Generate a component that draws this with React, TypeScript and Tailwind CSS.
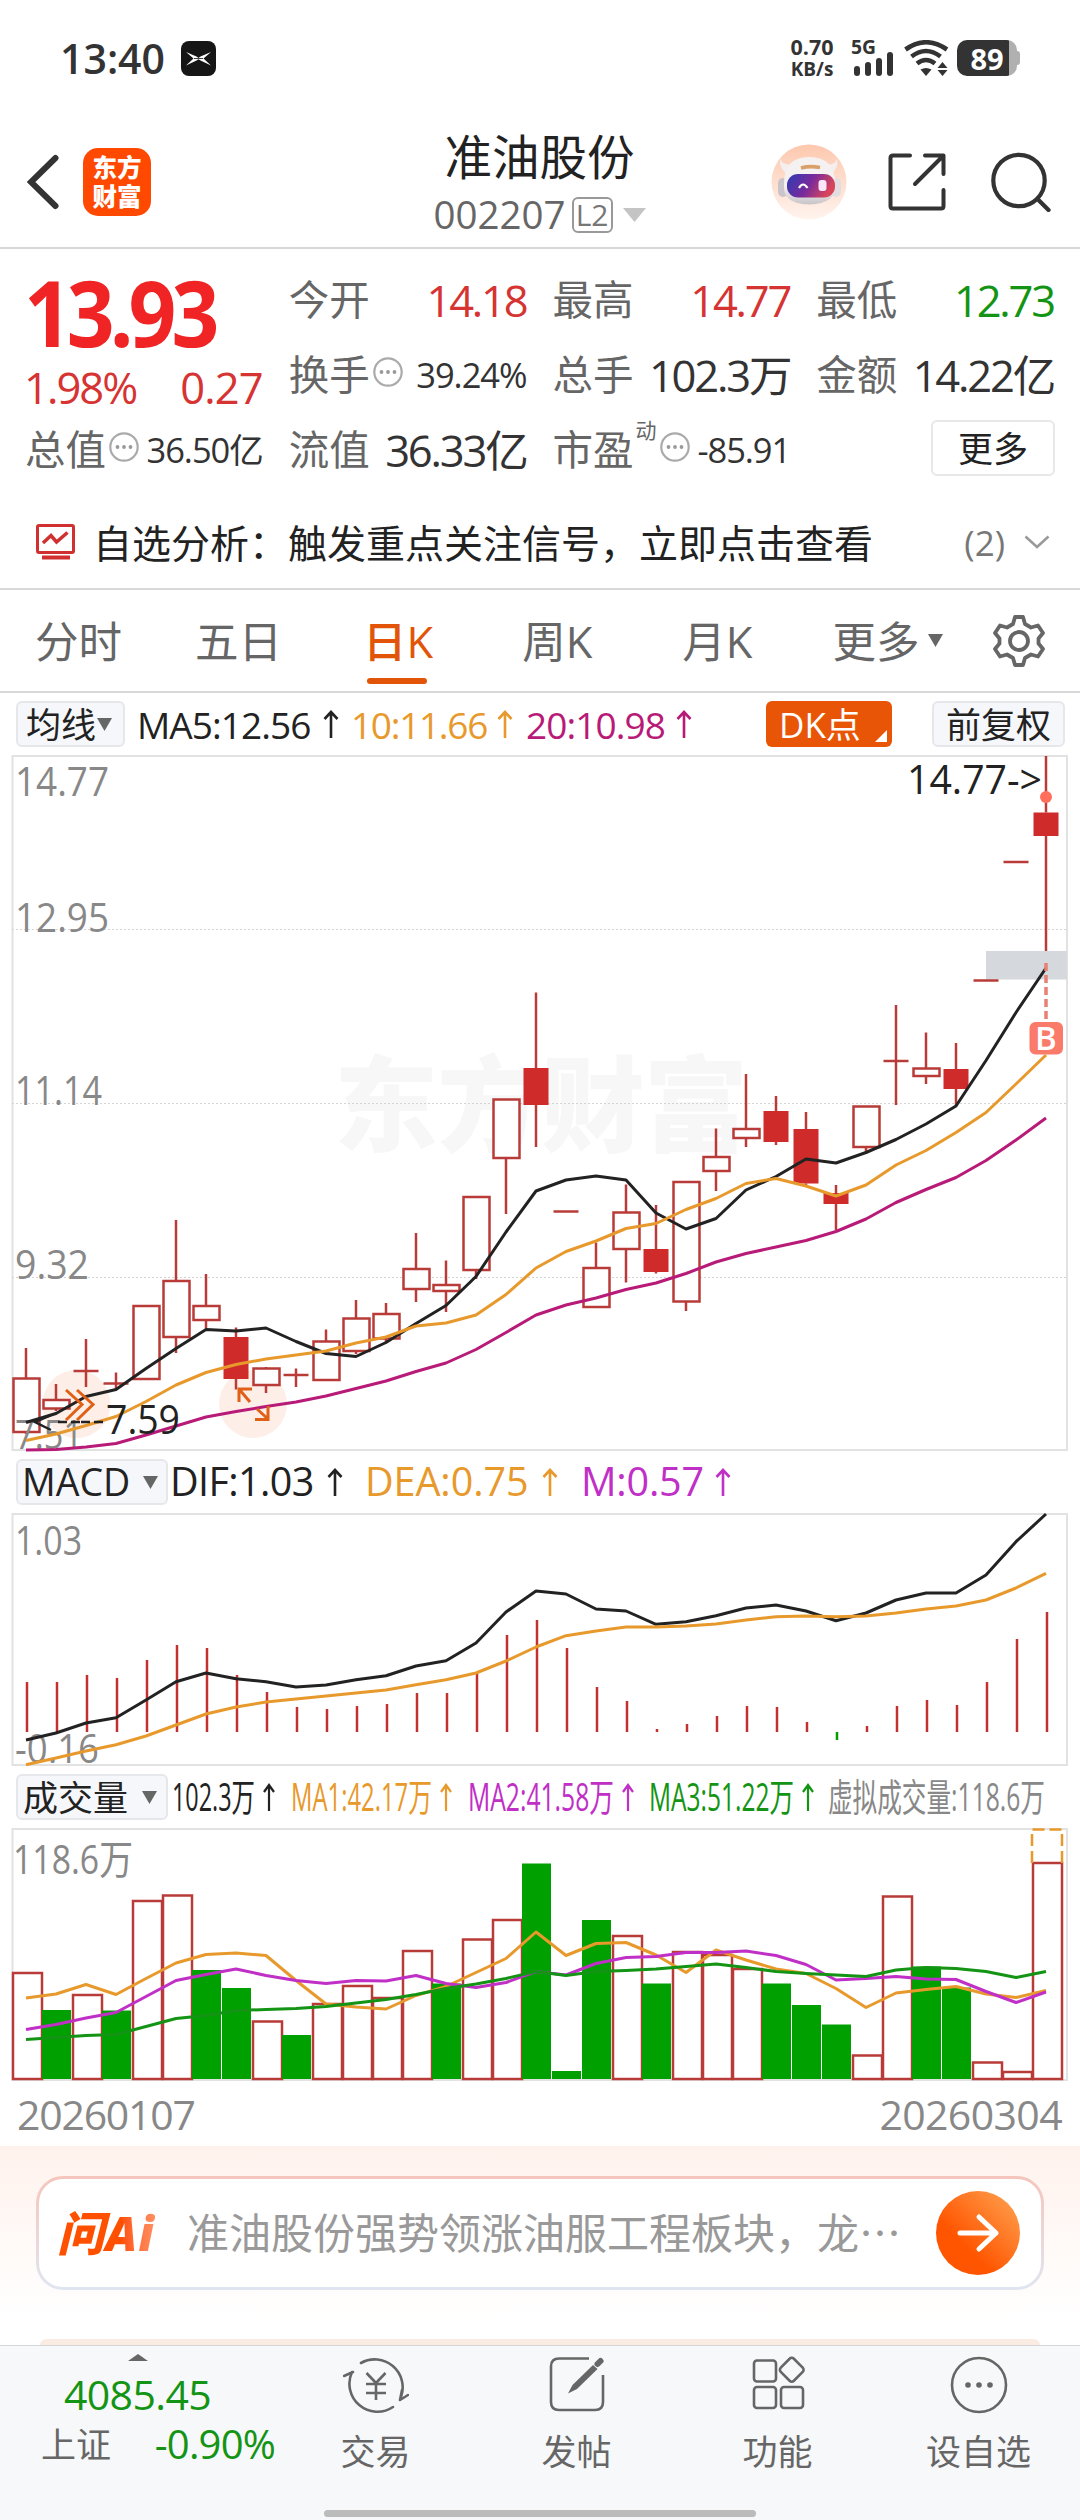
import type { ReactNode } from "react"
import clsx from "clsx"

const RED = "#b83b38"
const FILL_RED = "#cf2b2b"
const GREEN = "#00a000"
const ORANGE = "#e8992c"
const MAGENTA = "#b81a78"
const PURPLE = "#c02fc6"
const INK = "#222222"

type Candle = {
    kind: "up" | "down" | "flat"
    high: number
    top: number
    bottom: number
    low: number
}

const c = (kind: Candle["kind"], high: number, top: number, bottom: number, low: number): Candle => ({
    kind,
    high,
    top,
    bottom,
    low,
})

const candles: Candle[] = [
    c("up", 598, 628.5, 682, 684),
    c("up", 634, 650, 658.5, 661),
    c("flat", 589, 621, 621, 637),
    c("flat", 622.5, 633.5, 633.5, 639.5),
    c("up", 556, 556, 629, 629),
    c("up", 470, 531, 587, 603),
    c("up", 524, 556, 570, 578.5),
    c("down", 577.5, 587, 629, 639.5),
    c("up", 617, 618.5, 635, 643),
    c("flat", 618.5, 625, 625, 637),
    c("up", 579.5, 591.5, 630, 630),
    c("up", 550, 568.5, 601, 604),
    c("up", 553, 564, 588.5, 592),
    c("up", 483, 519, 539, 552),
    c("up", 510.5, 535, 541, 562),
    c("up", 447, 447, 520, 529),
    c("up", 349.5, 349.5, 408, 464),
    c("down", 242.5, 318, 355, 397),
    c("flat", 461.5, 461.5, 461.5, 461.5),
    c("up", 492.5, 518, 557, 557),
    c("up", 434.5, 462.5, 499, 532.5),
    c("down", 455, 499, 522, 523.5),
    c("up", 432, 432, 551.5, 561),
    c("up", 378.5, 407, 421, 441),
    c("up", 324, 379, 388, 397),
    c("down", 346, 361, 392, 395),
    c("down", 362, 379, 433.5, 435),
    c("down", 435, 443, 454, 480),
    c("up", 356.5, 356.5, 397, 404),
    c("flat", 255, 311, 311, 355),
    c("up", 282.5, 318.5, 326, 334),
    c("down", 293, 319, 339, 355),
    c("flat", 230.5, 230.5, 230.5, 230.5),
    c("flat", 112, 112, 112, 112),
    c("down", 6, 62.5, 86, 201),
]

const ma5 = [672.5, 663.5, 646.5, 639.5, 618.5, 598.5, 579.5, 581, 578, 591.5, 603.5, 606.5, 592.5, 573.5, 555.5, 526.5, 482, 441, 430, 426, 430, 463, 479, 468.5, 440, 426.5, 409, 413, 402.5, 389.5, 374, 356, 310.5, 262.5, 218]
const ma10 = [690.5, 684, 675.5, 666.5, 651.5, 635, 622.5, 614.5, 609, 605, 601, 593, 587, 576, 573, 565, 544.5, 518, 501.5, 491, 478.5, 473.5, 459.5, 448.5, 433.5, 428.5, 436, 446, 435, 415, 400.5, 382.5, 362.5, 334, 305]
const ma20 = [700, 699.5, 697, 693.5, 685, 676, 667, 661.5, 656.5, 652, 646, 638.5, 631, 621.5, 613, 599.5, 582.5, 565, 555, 548, 539.5, 533, 523.5, 512, 503.5, 497, 490.5, 481.5, 469, 452.5, 439.5, 427.5, 410.5, 390, 368]

const macdBars = [232, 232, 225, 228, 210, 195, 198, 225, 242, 257, 259, 256, 254, 243, 243, 222.7, 185, 170, 198, 237, 251, 279, 274, 266, 256, 257, 272, 290, 276, 256, 250, 255, 232, 189, 162]
const dif = [290, 283, 273, 267.7, 250, 231.7, 223, 228.7, 231.7, 237, 235, 229.7, 225.7, 216, 210.7, 193, 162, 141, 144, 159, 161, 174.3, 171.7, 165.7, 158, 155, 161, 170.7, 163, 150, 143, 143, 125, 91.7, 64]
const dea = [314.7, 308, 301, 294.7, 286, 275, 264, 257, 252, 249, 246, 243, 240, 234.7, 229.7, 223, 211, 197, 185.7, 181, 177, 177, 176, 174, 170, 166.7, 166, 166.7, 166, 163, 159, 156, 150, 138, 123.3]

const volumes = [203, 240, 225, 240.5, 131, 125.5, 200, 218, 251.5, 265, 234, 216, 228, 181, 213.5, 169.5, 150, 93.5, 301, 150, 166, 213.5, 182, 185, 199, 213.5, 235, 254.5, 285.5, 126.5, 196.5, 217.5, 292.5, 302, 93]
const fallingDays = [1, 3, 6, 7, 9, 14, 17, 18, 19, 21, 25, 26, 27, 30, 31]
const volMa1 = [228, 224, 214.5, 224.5, 208.5, 193, 184.5, 183, 185.5, 210.5, 234, 237, 239, 225.5, 216.5, 202.5, 188.5, 162, 185.5, 173.5, 172.5, 185, 202.5, 180, 190, 199, 203.5, 218.5, 237.5, 223, 219.5, 216.5, 224, 227.5, 220.5]
const volMa2 = [259.5, 254.5, 248, 242.5, 226.5, 210.5, 204.5, 199, 205.5, 210.5, 213.5, 210.5, 211, 205.5, 213.5, 217.5, 212.5, 201.5, 205, 193.5, 187.5, 186.5, 182.5, 182.5, 181, 185.5, 194.5, 210, 208.5, 206.5, 209, 209.5, 221.5, 232.5, 222]
const volMa3 = [269.5, 267.5, 265.5, 264.5, 256.5, 248.5, 245.5, 240.5, 239.5, 238.5, 236.5, 233, 229.5, 224.5, 218.5, 214, 208.5, 201.5, 205.5, 201.5, 200.5, 199, 196.5, 194, 197.5, 201.5, 203.5, 205, 206.5, 200, 197.5, 198.5, 201.5, 207.5, 201.5]

const xAt = (i: number) => 26 + i * 30

const Line = ({ values, color }: { values: number[]; color: string }) => (
    <polyline
        points={values.map((y, i) => `${xAt(i)},${y}`).join(" ")}
        fill="none"
        stroke={color}
        strokeWidth={3}
        strokeLinejoin="round"
    />
)

type AxisLabelProps = { x: number; y: number; length: number; color?: string; children: string }

const AxisLabel = ({ x, y, length, color = "#888888", children }: AxisLabelProps) => (
    <text x={x} y={y} fontSize={40} fill={color} textLength={length} lengthAdjust="spacingAndGlyphs">
        {children}
    </text>
)

const StatusBar = () => (
    <div className="flex h-[116px] items-center justify-between pl-[60px] pr-[60px] text-[#333]">
        <div className="flex items-center gap-[16px]">
            <span className="text-[41px] font-semibold leading-none">13:40</span>
            <svg width="35" height="35" viewBox="0 0 35 35">
                <rect width="35" height="35" rx="8" fill="#161616" />
                <path d="M5 11 L15.5 15.5 L17.5 17 L19.5 15.5 L30 11 L22.5 17.5 L30 24.5 L19.5 19.5 L17.5 18.3 L15.5 19.5 L5 24.5 L12.5 17.5 Z" fill="#fff" />
                <path d="M13 17.5 H22" stroke="#161616" strokeWidth="0.8" />
            </svg>
        </div>

        <div className="flex h-[36px] items-center">
            <div className="flex w-[46px] flex-col items-center text-[21.5px] font-bold leading-[22px]">
                <span>0.70</span>
                <span className="text-[19px]">KB/s</span>
            </div>
            <svg className="ml-[16px] overflow-visible" width="44" height="36" viewBox="0 0 44 36" fill="#333">
                <text x="0" y="14" fontSize="19" fontWeight="700" textLength="25" lengthAdjust="spacingAndGlyphs">5G</text>
                <rect x="3" y="26" width="6" height="10" rx="3" />
                <rect x="14" y="22" width="6" height="14" rx="3" />
                <rect x="25" y="18" width="6" height="18" rx="3" />
                <rect x="36" y="12" width="6" height="24" rx="3" />
            </svg>
            <svg className="ml-[9px]" width="45" height="36" viewBox="0 0 45 36" fill="none" stroke="#333" strokeWidth="4.6">
                <path d="M1.5 9.5 Q22 -5 43 9.5" />
                <path d="M7.5 16.5 Q22 5.500 36.500 16.500" />
                <path d="M13 23.500 Q22 16.500 31 23.500" />
                <path d="M16.500 29.500 Q22 26.500 27.500 29.500 L22 36 Z" fill="#333" stroke="none" />
                <path d="M33.500 28 L38.500 22 L43.500 28 Z M33.500 30 L38.500 36 L43.500 30 Z" fill="#333" stroke="none" />
            </svg>
            <div className="ml-[8px] flex h-[36px] w-[60px] items-center justify-center rounded-[10px] bg-gradient-to-r from-[#333] from-[87%] to-[#b0b0b0] to-[87%] text-[29px] font-bold leading-none text-white">
                89
            </div>
            <div className="h-[14px] w-[3px] rounded-r bg-[#b0b0b0]" />
        </div>
    </div>
)

const RobotAvatar = () => (
    <svg width="76" height="76" viewBox="0 0 76 76">
        <defs>
            <linearGradient id="halo" x1="0" y1="0" x2="0" y2="1">
                <stop offset="0" stopColor="#fdc8ae" />
                <stop offset="1" stopColor="#fff4ee" />
            </linearGradient>
            <linearGradient id="shell" x1="0" y1="0" x2="0" y2="1">
                <stop offset="0.6" stopColor="#f5f1f1" />
                <stop offset="1" stopColor="#c9c4c8" />
            </linearGradient>
            <linearGradient id="visor" x1="0" y1="0" x2="1" y2="0.3">
                <stop offset="0" stopColor="#2b3cb4" />
                <stop offset="0.55" stopColor="#7a2a9c" />
                <stop offset="1" stopColor="#d8455a" />
            </linearGradient>
        </defs>
        <circle cx="38" cy="38" r="37.500" fill="url(#halo)" />
        <path d="M9 15 Q8 26 17 30 L22 20 Q12 22 9 15 Z M66 15 Q68 26 59 30 L54 20 Q64 22 66 15 Z" fill="#f4eeee" />
        <rect x="7" y="34" width="10" height="19" rx="5" fill="#c9c5ca" />
        <rect x="60" y="34" width="10" height="19" rx="5" fill="#e2dde0" />
        <path d="M13 40 Q13 13 38 13 Q64 13 64 40 Q66 60 38 60.500 Q11 60 13 40 Z" fill="url(#shell)" />
        <path d="M30 24 Q39 21.500 49 23.500" stroke="#d9a06a" strokeWidth="3.600" fill="none" />
        <rect x="16" y="30" width="48" height="23.500" rx="11" fill="url(#visor)" />
        <path d="M28 44 Q32 37 36.500 44" stroke="#fff" strokeWidth="2.200" fill="none" />
        <rect x="47.500" y="36" width="8" height="11" rx="3" fill="#fbe6fb" />
    </svg>
)

const Header = () => (
    <div className="flex h-[133px] items-center border-b-2 border-[#d8d8d8] pl-[27px] pr-[29px]">
        <svg width="33" height="56" viewBox="0 0 33 56" fill="none" stroke="#333" strokeWidth="6" strokeLinecap="round" strokeLinejoin="miter">
            <path d="M28.500 4 L4 28 L28.500 52" />
        </svg>
        <div className="ml-[23px] flex h-[68px] w-[68px] flex-col items-center justify-center rounded-[15px] bg-[#ff4800] text-[24.500px] font-black leading-[29px] text-white">
            <span>东方</span>
            <span>财富</span>
        </div>

        <div className="ml-[280px] flex w-[217px] flex-col items-center pt-[8px]">
            <span className="whitespace-nowrap text-[47.500px] leading-[58px] text-[#222]">准油股份</span>
            <div className="flex h-[57px] items-center">
                <span className="text-[38.500px] leading-none text-[#666]">002207</span>
                <span className="ml-[6px] flex h-[36px] w-[41px] items-center justify-center rounded-md border-2 border-[#999] text-[30px] leading-none text-[#777]">
                    L2
                </span>
                <svg className="ml-[10px]" width="23" height="14" viewBox="0 0 23 14">
                    <path d="M0 0 H23 L11.500 14 Z" fill="#c4c4c4" />
                </svg>
            </div>
        </div>

        <div className="ml-auto flex items-center">
            <RobotAvatar />
            <svg className="ml-[41px]" width="58" height="58" viewBox="0 0 58 58" fill="none" stroke="#333" strokeWidth="4" strokeLinecap="round" strokeLinejoin="round">
                <path d="M22 2.500 H5 Q2.500 2.500 2.500 5 V53 Q2.500 55.500 5 55.500 H53 Q55.500 55.500 55.500 53 V37" />
                <path d="M37 2.500 H55.500 V21 M55 3 L27 31" />
            </svg>
            <svg className="ml-[45px]" width="60" height="60" viewBox="0 0 60 60" fill="none" stroke="#333" strokeWidth="4.200" strokeLinecap="round">
                <circle cx="28" cy="28.500" r="25.700" />
                <path d="M46.500 47 L57.500 58" />
            </svg>
        </div>
    </div>
)

const InfoDot = () => (
    <svg className="shrink-0" width="30" height="30" viewBox="0 0 30 30">
        <circle cx="15" cy="15" r="13.700" fill="none" stroke="#aaa" strokeWidth="2.200" />
        <g fill="#999">
            <circle cx="8.500" cy="15" r="1.900" />
            <circle cx="15" cy="15" r="1.900" />
            <circle cx="21.500" cy="15" r="1.900" />
        </g>
    </svg>
)

type StatProps = {
    label: string
    value: string
    tone?: string
    info?: boolean
    sup?: string
}

const Stat = ({ label, value, tone = "text-[#333]", info = false, sup }: StatProps) => (
    <div className="flex h-[75px] items-center whitespace-nowrap">
        <span className="-ml-px text-[40.500px] leading-none text-[#666]">{label}</span>
        {sup && <span className="mb-10 ml-[2px] text-[21px] leading-none text-[#666]">{sup}</span>}
        {info && (
            <span className="mb-[7px] ml-[3px]">
                <InfoDot />
            </span>
        )}
        <span className={clsx("ml-auto leading-none", tone, info ? "text-[34.500px] tracking-[-0.03em]" : "text-[43.500px] tracking-[-0.05em]")}>
            {value}
        </span>
    </div>
)

const Quote = () => (
    <section className="grid h-[239px] grid-cols-4 gap-[27px] px-[26px] pt-[14px]">
        <div>
            <div className="-ml-[2px] flex h-[99px] origin-left scale-x-[0.92] items-center text-[91px] font-bold leading-none tracking-[-0.06em] text-[#f02424]">
                13.93
            </div>
            <div className="-ml-[2px] flex h-[51px] items-center justify-between text-[43.500px] leading-none tracking-[-0.045em] text-[#d63333]">
                <span>1.98%</span>
                <span className="tracking-[-0.02em]">0.27</span>
            </div>
            <Stat label="总值" value="36.50亿" info />
        </div>
        <div>
            <Stat label="今开" value="14.18" tone="text-[#d63333]" />
            <Stat label="换手" value="39.24%" info />
            <Stat label="流值" value="36.33亿" />
        </div>
        <div>
            <Stat label="最高" value="14.77" tone="text-[#d63333]" />
            <Stat label="总手" value="102.3万" />
            <Stat label="市盈" value="-85.91" sup="动" info />
        </div>
        <div>
            <Stat label="最低" value="12.73" tone="text-[#149414]" />
            <Stat label="金额" value="14.22亿" />
            <div className="-mr-px flex h-[70px] items-center justify-end">
                <span className="flex h-[56px] w-[124px] items-center justify-center rounded-md border-2 border-[#e8e8e8] text-[35px] leading-none text-[#222]">
                    更多
                </span>
            </div>
        </div>
    </section>
)

const AnalysisRow = () => (
    <div className="flex h-[102px] items-center border-b-2 border-[#d8d8d8] pl-[36px] pr-[30px] pt-[8px]">
        <svg width="39" height="36" viewBox="0 0 39 36" fill="none" stroke="#d03030" strokeWidth="3">
            <rect x="1.500" y="1.500" width="36" height="27" rx="1.500" />
            <path d="M7 19 L15 11.500 L20.500 18 L31.500 8.500" strokeWidth="3.500" />
            <path d="M6 33.500 H34" strokeWidth="4" />
        </svg>
        <span className="ml-[18px] whitespace-nowrap text-[39px] leading-none text-[#222]">
            自选分析：触发重点关注信号，立即点击查看
        </span>
        <span className="ml-auto text-[35px] leading-none text-[#777]">(2)</span>
        <svg className="ml-[19px]" width="26" height="14" viewBox="0 0 26 14" fill="none" stroke="#999" strokeWidth="2.500">
            <path d="M1.500 1.500 L13 12 L24.500 1.500" />
        </svg>
    </div>
)

const Caret = ({ className }: { className?: string }) => (
    <svg className={className} width="15" height="13" viewBox="0 0 15 13">
        <path d="M0 0 H15 L7.500 13 Z" fill="#666" />
    </svg>
)

const tabs = [
    { name: "分时", left: "ml-[35px]" },
    { name: "五日", left: "ml-[73px]" },
    { name: "日K", left: "ml-[81px]", active: true },
    { name: "周K", left: "ml-[89px]" },
    { name: "月K", left: "ml-[90px]" },
    { name: "更多", left: "ml-[80px]" },
]

const Tabs = () => (
    <nav className="flex h-[103px] items-center border-b-2 border-[#d8d8d8] pt-[3px] text-[43.500px] leading-none text-[#666]">
        {tabs.map((tab) => (
            <div
                key={tab.name}
                className={clsx("relative whitespace-nowrap", tab.left, tab.active && "font-medium text-[#e25508]")}
            >
                {tab.name}
                {tab.active && <div className="absolute -bottom-[20px] left-[4px] h-[6px] w-[60px] rounded-full bg-[#e25508]" />}
            </div>
        ))}
        <Caret className="mb-[3px] ml-[9px]" />
        <svg className="mb-[2px] ml-auto mr-[34px]" width="54" height="54" viewBox="0 0 54 54" fill="none" stroke="#666" strokeWidth="3.800" strokeLinejoin="round">
            <path d="M23 3 H31 L33 10 L39 13.500 L46 11.500 L51 19 L46.500 24.500 V29.500 L51 35 L46 42.500 L39 40.500 L33 44 L31 51 H23 L21 44 L15 40.500 L8 42.500 L3 35 L7.500 29.500 V24.500 L3 19 L8 11.500 L15 13.500 L21 10 Z" />
            <circle cx="27" cy="27" r="9" />
        </svg>
    </nav>
)

const Chip = ({ className, children }: { className?: string; children: ReactNode }) => (
    <div
        className={clsx(
            "flex h-[46px] shrink-0 items-center whitespace-nowrap rounded-md border-2 border-[#e6e7ea] bg-[#f6f7fa] text-[35px] leading-none text-[#222]",
            className,
        )}
    >
        {children}
    </div>
)

const Up = () => (
    <svg className="inline-block shrink-0" width="16" height="28" viewBox="0 0 16 28" fill="none" stroke="currentColor" strokeWidth="2.600">
        <path d="M8 28 V2 M1.500 9 L8 2 L14.500 9" />
    </svg>
)

const Reading = ({ className, children }: { className: string; children: ReactNode }) => (
    <span className={clsx("flex shrink-0 items-center justify-between whitespace-nowrap leading-none", className)}>
        {children}
        <Up />
    </span>
)

const PriceChart = () => (
    <section>
        <div className="flex h-[61px] items-center pl-[16px] pr-[15px] pt-px">
            <Chip className="w-[109px] pl-[8px]">
                均线
                <Caret className="ml-px" />
            </Chip>
            <Reading className="ml-[12px] w-[202px] text-[37px] tracking-[-0.025em] text-[#222]">MA5:12.56</Reading>
            <Reading className="ml-[12px] w-[162px] text-[37px] tracking-[-0.035em] text-[#e8992c]">10:11.66</Reading>
            <Reading className="ml-[13px] w-[166px] text-[37px] tracking-[-0.025em] text-[#b81a78]">20:10.98</Reading>
            <div className="relative ml-auto flex h-[46px] w-[126px] items-center rounded-md bg-[#e85506] pl-[13px] text-[35px] leading-none text-white">
                DK点
                <svg className="absolute bottom-[5px] right-[5px]" width="12" height="12" viewBox="0 0 12 12">
                    <path d="M12 0 V12 H0 Z" fill="#fff" />
                </svg>
            </div>
            <Chip className="ml-[40px] w-[133px] justify-center">前复权</Chip>
        </div>

        <svg className="block overflow-visible" width="1080" height="698" viewBox="0 4 1080 698">
            <rect x="12.500" y="6" width="1054.500" height="694" fill="none" stroke="#e2e2e2" strokeWidth="2" />
            <text x="334" y="394" fontSize="104" fontWeight="900" fill="#f7f7f7" textLength="414">东方财富</text>
            {[179.5, 353.5, 527.5].map((y) => (
                <path key={y} d={`M12 ${y} H1067`} stroke="#d4d4d4" strokeWidth="1" strokeDasharray="2 2" />
            ))}
            <rect x="986" y="201" width="81" height="28.500" fill="#d5d8dc" />
            <circle cx="76.500" cy="654" r="34" fill="#fdeee7" />
            <circle cx="253" cy="654" r="34" fill="#fdeee7" />

            {candles.map((k, i) => {
                const x = xAt(i)
                return (
                    <g key={i} stroke={RED} strokeWidth="2.500">
                        {k.high < k.top && <path d={`M${x} ${k.high} V${k.top}`} />}
                        {k.low > k.bottom && <path d={`M${x} ${k.bottom} V${k.low}`} />}
                        {k.kind === "flat" && <path d={`M${x - 12.5} ${k.top} H${x + 12.5}`} />}
                        {k.kind === "up" && (
                            <rect x={x - 12.5} y={k.top} width="26" height={k.bottom - k.top} fill="#fff" />
                        )}
                        {k.kind === "down" && (
                            <rect x={x - 12.5} y={k.top} width="25" height={k.bottom - k.top} fill={FILL_RED} stroke="none" />
                        )}
                    </g>
                )
            })}

            <AxisLabel x={15} y={45.500} length={94}>14.77</AxisLabel>
            <AxisLabel x={15} y={181.500} length={94}>12.95</AxisLabel>
            <AxisLabel x={15} y={354.5} length={87}>11.14</AxisLabel>
            <AxisLabel x={15} y={528.500} length={74}>9.32</AxisLabel>
            <AxisLabel x={15} y={699} length={68}>7.51</AxisLabel>

            <Line values={ma5} color={INK} />
            <Line values={ma10} color={ORANGE} />
            <Line values={ma20} color={MAGENTA} />

            <path d="M51 665 L35 672 L51 680 M58 672 H67 M71 672 H80 M81 672 H90 M94 672 H103" fill="none" stroke={INK} strokeWidth="2.500" />
            <AxisLabel x={106} y={684} length={74} color={INK}>7.59</AxisLabel>
            <AxisLabel x={907} y={44} length={135} color={INK}>{"14.77->"}</AxisLabel>

            <g fill="none" stroke="#e06018" strokeWidth="3">
                <path d="M66 640 L82 654.500 L66 670 M77 640 L93 654.500 L77 670" />
                <path d="M250 652 L239 639 M239 652 V639 H252 M257 659 L268 669 M268 656 V669.500 H255" />
            </g>

            <circle cx="1046" cy="47" r="6" fill="#ff6f5c" />
            <path d="M1046 213 V270" stroke="#e98074" strokeWidth="3.500" strokeDasharray="8 4" />
            <rect x="1029.500" y="272" width="33.500" height="32.500" rx="6" fill="#fb7b6b" />
            <text x="1046" y="299.500" fontSize="33" fontWeight="600" fill="#fff" textAnchor="middle">B</text>
        </svg>
    </section>
)

const MacdChart = () => (
    <section>
        <div className="flex h-[60px] items-center pl-[16px]">
            <Chip className="w-[152px] pl-[4px]">
                <span className="w-[110px] text-[37.500px]">MACD</span>
                <Caret className="ml-[11px]" />
            </Chip>
            <Reading className="ml-[2px] w-[173px] text-[39.500px] tracking-[-0.015em] text-[#222]">DIF:1.03</Reading>
            <Reading className="ml-[22px] w-[193px] text-[39.500px] tracking-[-0.002em] text-[#e8992c]">DEA:0.75</Reading>
            <Reading className="ml-[23px] w-[150px] text-[39.500px] tracking-[-0.005em] text-[#c02fc6]">M:0.57</Reading>
        </div>

        <svg className="block overflow-visible" width="1080" height="255" viewBox="0 62 1080 255">
            <rect x="12.500" y="64" width="1054.500" height="251" fill="none" stroke="#e2e2e2" strokeWidth="2" />
            {macdBars.map((y, i) => (
                <path key={i} d={`M${xAt(i) + 1} 282 V${y}`} stroke={y > 282 ? GREEN : "#c23030"} strokeWidth="2.500" />
            ))}
            <AxisLabel x={15} y={104.500} length={67}>1.03</AxisLabel>
            <AxisLabel x={15} y={312.500} length={84}>-0.16</AxisLabel>
            <Line values={dif} color={INK} />
            <Line values={dea} color={ORANGE} />
        </svg>
    </section>
)

const VolumeReading = ({ x, length, color, children }: { x: number; length: number; color: string; children: string }) => (
    <g>
        <text x={x} y="36" fill={color} textLength={length} lengthAdjust="spacingAndGlyphs">
            {children}
        </text>
        <path d={`M${x + length + 14} 36 V10 M${x + length + 9} 17 L${x + length + 14} 10 L${x + length + 19} 17`} fill="none" stroke={color} strokeWidth="2.200" />
    </g>
)

const VolumeChart = () => (
    <section>
        <div className="flex h-[60px] items-center pl-[16px]">
            <Chip className="w-[152px] pl-[5px]">
                成交量
                <Caret className="ml-[14px]" />
            </Chip>
            <svg className="overflow-visible" width="900" height="44" viewBox="0 0 900 44" fontSize="38">
                <VolumeReading x={4} length={83} color={INK}>102.3万</VolumeReading>
                <VolumeReading x={123} length={141} color={ORANGE}>MA1:42.17万</VolumeReading>
                <VolumeReading x={300} length={146} color={PURPLE}>MA2:41.58万</VolumeReading>
                <VolumeReading x={481} length={145} color="#149414">MA3:51.22万</VolumeReading>
                <text x="660" y="36" fill="#888" textLength="217" lengthAdjust="spacingAndGlyphs">虚拟成交量:118.6万</text>
            </svg>
        </div>

        <svg className="block overflow-visible" width="1080" height="255" viewBox="0 57 1080 255">
            <rect x="12.500" y="59" width="1054.500" height="251" fill="none" stroke="#e2e2e2" strokeWidth="2" />
            <AxisLabel x={13} y={104} length={120}>118.6万</AxisLabel>
            {volumes.map((y, i) => {
                const x = 12 + i * 30
                return fallingDays.includes(i) ? (
                    <rect key={i} x={x} y={y} width="29" height={309 - y} fill={GREEN} />
                ) : (
                    <rect key={i} x={x + 1} y={y} width="29" height={309 - y} fill="#fff" stroke={RED} strokeWidth="2.500" />
                )
            })}
            <path d="M1032 93 V59.500 H1062 V93" fill="none" stroke={ORANGE} strokeWidth="2.500" strokeDasharray="12 5" />
            <Line values={volMa1} color={ORANGE} />
            <Line values={volMa2} color={PURPLE} />
            <Line values={volMa3} color="#149414" />
        </svg>

        <div className="flex h-[64px] items-center justify-between pl-[17px] pr-[18px] text-[41px] leading-none text-[#888]">
            <span className="tracking-[-0.03em]">20260107</span>
            <span className="tracking-[-0.015em]">20260304</span>
        </div>
    </section>
)

const AskAi = () => (
    <section className="flex h-[199px] flex-col items-center bg-gradient-to-b from-[#fff2ed] to-white to-[88%] pt-[30px]">
        <div className="w-[1008px] rounded-[27px] bg-gradient-to-b from-[#f5c5bc] to-[#dfe6f1] p-[3px]">
            <div className="flex h-[108px] items-center rounded-[24px] bg-white pl-[18px] pr-[21px]">
                <div className="w-[107px] whitespace-nowrap bg-gradient-to-r from-[#ff5000] from-[60%] to-[#ff9d70] bg-clip-text text-[47px] font-black italic leading-[56px] tracking-[0.03em] text-transparent">
                    问Ai
                </div>
                <span className="ml-[23px] whitespace-nowrap text-[42px] leading-none text-[#999]">
                    准油股份强势领涨油服工程板块，龙⋯
                </span>
                <svg className="ml-auto shrink-0" width="84" height="84" viewBox="0 0 84 84">
                    <defs>
                        <linearGradient id="go" x1="0.2" y1="0.8" x2="0.9" y2="0.1">
                            <stop offset="0.2" stopColor="#ff5500" />
                            <stop offset="1" stopColor="#ff9a48" />
                        </linearGradient>
                    </defs>
                    <circle cx="42" cy="42" r="42" fill="url(#go)" />
                    <path d="M24 42 H60 M43 26 L60 42 L43 58" fill="none" stroke="#fff" strokeWidth="5" strokeLinecap="round" strokeLinejoin="round" />
                </svg>
            </div>
        </div>
        <div className="mt-auto h-[6px] w-[1000px] rounded-t-[24px] bg-[#fbece3]" />
    </section>
)

const NavItem = ({ label, children }: { label: string; children: ReactNode }) => (
    <div className="flex w-[201px] flex-col items-center">
        <svg width="66" height="60" viewBox="0 0 66 60" fill="none" stroke="#666" strokeWidth="2.600" strokeLinecap="round" strokeLinejoin="round">
            {children}
        </svg>
        <span className="mt-[20px] text-[35px] leading-none text-[#666]">{label}</span>
    </div>
)

const BottomNav = () => (
    <footer className="relative h-[175px] border-t border-[#d5d6d8] bg-[#f7f8fa] pt-[8px]">
        <div className="flex">
            <div className="flex w-[275px] flex-col items-center">
                <svg width="20" height="7" viewBox="0 0 20 7">
                    <path d="M0 7 L10 0 L20 7 Z" fill="#666" />
                </svg>
                <span className="mt-[13px] text-[41px] leading-none tracking-[-0.015em] text-[#149414]">4085.45</span>
                <div className="mt-[9px] flex w-full items-center justify-between pl-[41px] leading-none">
                    <span className="text-[35px] text-[#666]">上证</span>
                    <span className="text-[40px] tracking-[-0.02em] text-[#149414]">-0.90%</span>
                </div>
            </div>
            <NavItem label="交易">
                <path d="M18 9 A28 28 0 0 1 58 43 M57 46 L65 41 M57 46 L59 36" />
                <path d="M50 53 A28 28 0 0 1 9 18 M1 22 L10 18" />
                <path d="M23.500 19 L33 29 L42.500 19 M23 30 H43 M23 39 H43 M33 29 V46" strokeLinecap="butt" />
            </NavItem>
            <NavItem label="发帖">
                <path d="M45 4.500 H15 Q7 4.500 7 12.500 V48 Q7 56 15 56 H51 Q59 56 59 48 V21" strokeLinecap="butt" />
                <path d="M53.500 10 L56.500 7" strokeWidth="6" />
                <path d="M49 11 L53.500 15 L33 35 L24 39.500 L28.500 31 Z" fill="#666" stroke="none" />
            </NavItem>
            <NavItem label="功能">
                <rect x="9" y="6.500" width="22" height="21" rx="3" />
                <rect x="9" y="33" width="22" height="21" rx="3" />
                <rect x="36" y="33" width="22" height="21" rx="3" />
                <rect x="37.500" y="6.500" width="18.500" height="18.500" rx="3" transform="rotate(45 46.750 15.750)" />
            </NavItem>
            <NavItem label="设自选">
                <circle cx="33" cy="31" r="27" />
                <g fill="#666" stroke="none">
                    <circle cx="22" cy="31" r="2.800" />
                    <circle cx="33" cy="31" r="2.800" />
                    <circle cx="44" cy="31" r="2.800" />
                </g>
            </NavItem>
        </div>
        <div className="absolute bottom-[3px] left-[324px] h-[7px] w-[432px] rounded-full bg-[#bbb]" />
    </footer>
)

const App = () => {
    return (
        <main className="flex h-[2520px] w-[1080px] flex-col overflow-hidden bg-white font-['Open_Sans','Noto_Sans_CJK_SC',sans-serif] [font-stretch:95%]">
            <StatusBar />
            <Header />
            <Quote />
            <AnalysisRow />
            <Tabs />
            <PriceChart />
            <MacdChart />
            <VolumeChart />
            <AskAi />
            <BottomNav />
        </main>
    )
}

export default App
